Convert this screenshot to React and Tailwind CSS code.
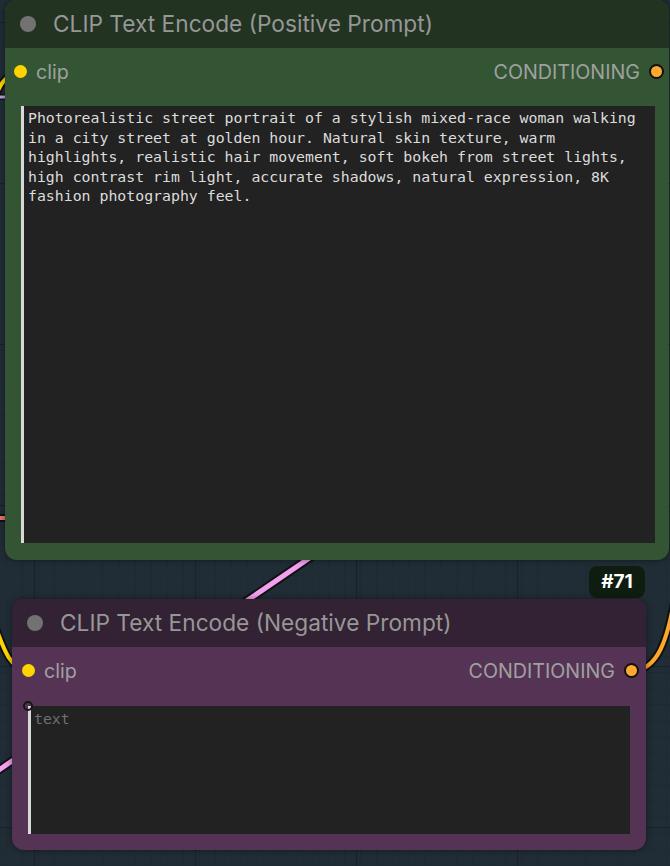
import React from 'react';

const positiveLines = [
  'Photorealistic street portrait of a stylish mixed-race woman walking',
  'in a city street at golden hour. Natural skin texture, warm',
  'highlights, realistic hair movement, soft bokeh from street lights,',
  'high contrast rim light, accurate shadows, natural expression, 8K',
  'fashion photography feel.',
];

function Wires() {
  return (
    <svg className="absolute inset-0" width="670" height="866" viewBox="0 0 670 866">
      <defs>
        <pattern id="minor" x="4" y="6" width="16.1" height="16.1" patternUnits="userSpaceOnUse">
          <path d="M 16.1 0 L 0 0 0 16.1" fill="none" stroke="#1b252c" strokeWidth="1" />
        </pattern>
        <pattern id="major" x="34" y="22" width="161" height="161" patternUnits="userSpaceOnUse">
          <rect width="161" height="161" fill="url(#minor)" />
          <path d="M 161 0 L 0 0 0 161" fill="none" stroke="#19222a" strokeWidth="2.5" />
        </pattern>
      </defs>
      <rect width="670" height="866" fill="#212d36" />
      <rect width="670" height="866" fill="url(#major)" />

      {/* pink */}
      <path d="M 330 544 L -10 776" stroke="#111" strokeWidth="9" fill="none" />
      <path d="M 330 544 L -10 776" stroke="#f2a0ef" strokeWidth="5" fill="none" />
      {/* salmon stub */}
      <path d="M -5 518 L 12 518" stroke="#111" strokeWidth="8" fill="none" />
      <path d="M -5 518 L 12 518" stroke="#ee7070" strokeWidth="4" fill="none" />
      {/* lavender stub */}
      <path d="M -5 97 L 12 97" stroke="#111" strokeWidth="6" fill="none" />
      <path d="M -5 97 L 12 97" stroke="#b9a2e0" strokeWidth="3" fill="none" />
      {/* yellow top */}
      <path d="M -6 100 C 0 84, 6 74, 20 72" stroke="#111" strokeWidth="8" fill="none" />
      <path d="M -6 100 C 0 84, 6 74, 20 72" stroke="#ffd500" strokeWidth="4" fill="none" />
      {/* yellow bottom */}
      <path d="M -4 628 C 4 650, 10 668, 28 671" stroke="#111" strokeWidth="8" fill="none" />
      <path d="M -4 628 C 4 650, 10 668, 28 671" stroke="#ffd500" strokeWidth="4" fill="none" />
      {/* orange */}
      <path d="M 631 671 C 658 671, 668 640, 676 590" stroke="#111" strokeWidth="8" fill="none" />
      <path d="M 631 671 C 658 671, 668 640, 676 590" stroke="#ffa72c" strokeWidth="4" fill="none" />
    </svg>
  );
}

function Slot({ label, side }) {
  return (
    <div className="flex items-center gap-[9px]">
      {side === 'in' && <span className="w-[13px] h-[13px] rounded-full bg-[#ffd500]" />}
      <span className="text-[19.7px] text-[#a0a0a0] leading-none pt-[2px]">{label}</span>
      {side === 'out' && (
        <span className="w-[15px] h-[15px] rounded-full bg-[#ffa931] border-2 border-[#111]" />
      )}
    </div>
  );
}

function NodeHeader({ title, bg }) {
  return (
    <div className={`h-12 flex items-center gap-[17px] pl-[15px] rounded-t-[12px] ${bg}`}>
      <span className="w-4 h-4 rounded-full bg-[#727272]" />
      <span className="text-[22.7px] text-[#979797] leading-none">{title}</span>
    </div>
  );
}

export default function App() {
  return (
    <div className="relative w-[670px] h-[866px] overflow-hidden bg-[#212d36] font-['Inter',sans-serif]">
      <Wires />

      {/* positive node */}
      <div className="absolute left-[5px] top-0 w-[664px] h-[560px] rounded-[12px] bg-[#335533] shadow-[0_0_6px_rgba(0,0,0,0.45)] flex flex-col">
        <NodeHeader title="CLIP Text Encode (Positive Prompt)" bg="bg-[#223322]" />
        <div className="h-12 flex items-center justify-between pl-[9px] pr-[5px]">
          <Slot label="clip" side="in" />
          <Slot label="CONDITIONING" side="out" />
        </div>
        <div className="mt-[10px] ml-4 mr-[14px] h-[437px] bg-[#222222] border-l-[3px] border-[#d8d8d8] pl-1 pt-[3px] font-['DejaVu_Sans_Mono',monospace] text-[14.85px] leading-[19.5px] text-[#dcdcdc]">
          {positiveLines.map((l) => (
            <div key={l} className="whitespace-pre">{l}</div>
          ))}
        </div>
      </div>

      {/* badge */}
      <div className="absolute left-[589px] top-[566px] w-[56px] h-[32px] rounded-[8px] bg-[#0f1d10] flex items-center justify-center text-white font-bold text-[19px]">
        #71
      </div>

      {/* negative node */}
      <div className="absolute left-[12px] top-[599px] w-[634px] h-[251px] rounded-[12px] bg-[#553355] shadow-[0_0_6px_rgba(0,0,0,0.45)] flex flex-col">
        <NodeHeader title="CLIP Text Encode (Negative Prompt)" bg="bg-[#332233]" />
        <div className="h-12 flex items-center justify-between pl-[10px] pr-[7px]">
          <Slot label="clip" side="in" />
          <Slot label="CONDITIONING" side="out" />
        </div>
        <div className="relative mt-[11px] mx-4 h-[128px] bg-[#222222] border-l-[3px] border-[#d8d8d8] pl-[3px] pt-[4px] font-['DejaVu_Sans_Mono',monospace] text-[14.85px] leading-[19.5px] text-[#6f6f6f]">
          text
          <span className="absolute -left-[8px] -top-[5px] w-[10px] h-[10px] rounded-full border-2 border-[#151515]" />
        </div>
      </div>
    </div>
  );
}
